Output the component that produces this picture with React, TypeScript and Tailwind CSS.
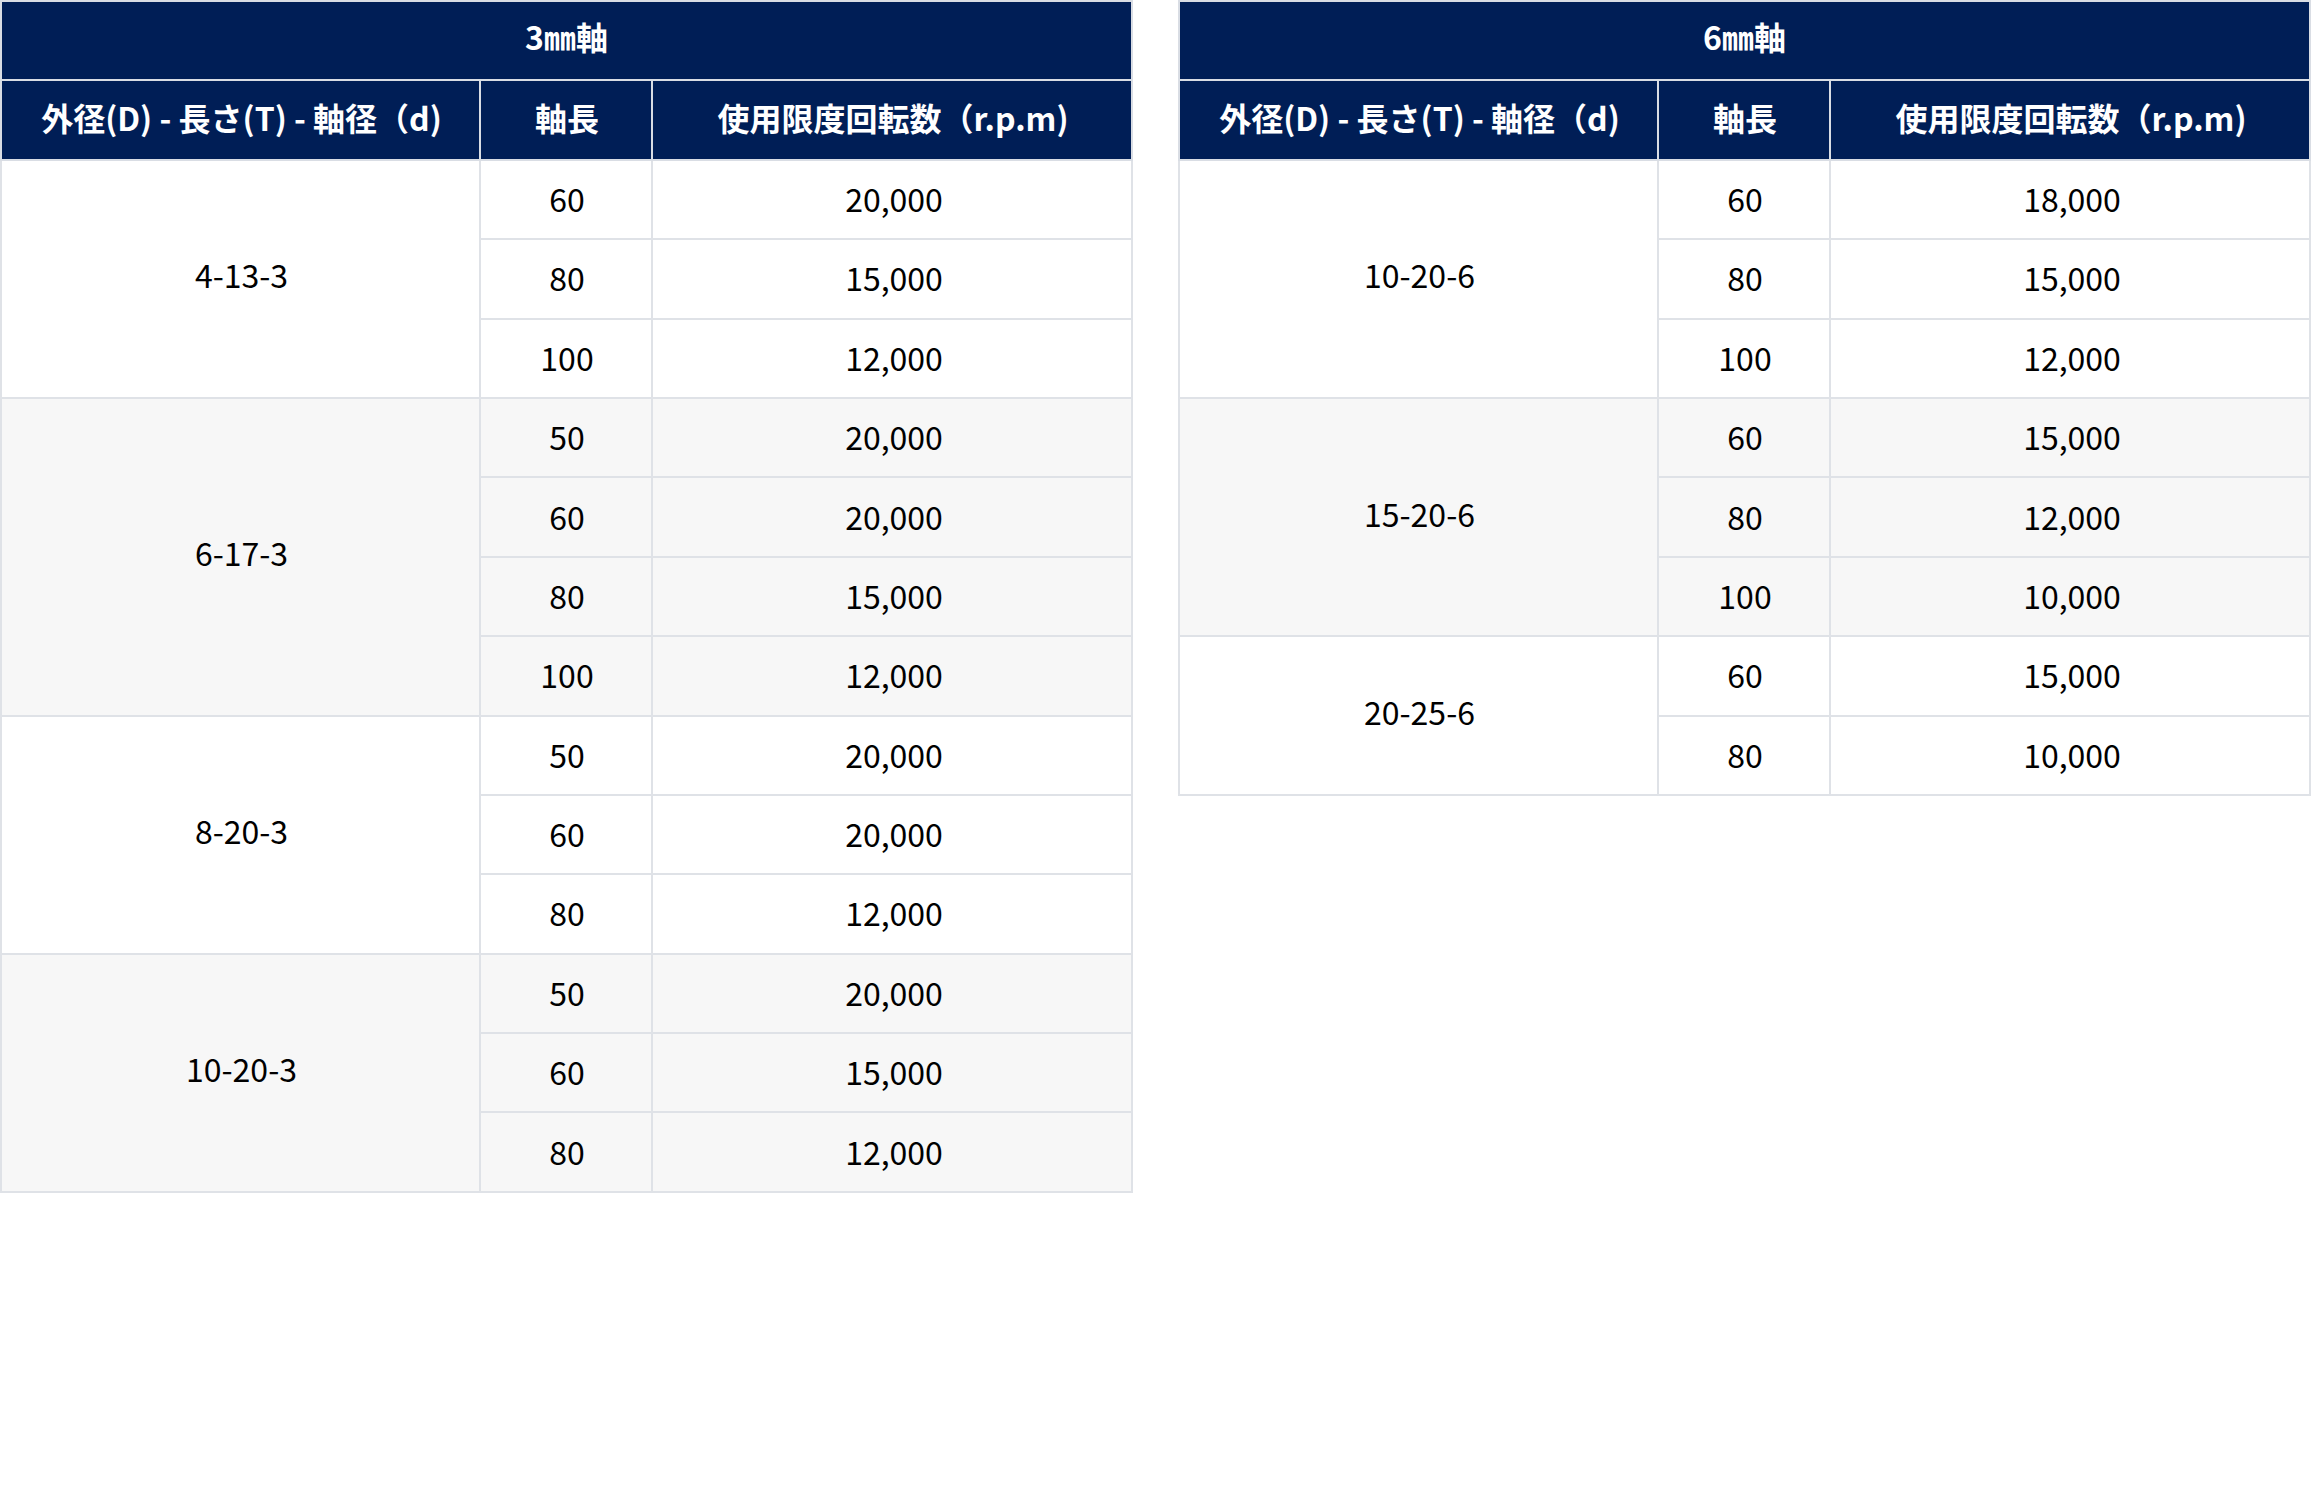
import React from "react";

type Group = {
  size: string;
  rows: [string, string][];
};

type SpecTable = {
  title: string;
  groups: Group[];
};

const tables: SpecTable[] = [
  {
    title: "3㎜軸",
    groups: [
      { size: "4-13-3", rows: [["60", "20,000"], ["80", "15,000"], ["100", "12,000"]] },
      { size: "6-17-3", rows: [["50", "20,000"], ["60", "20,000"], ["80", "15,000"], ["100", "12,000"]] },
      { size: "8-20-3", rows: [["50", "20,000"], ["60", "20,000"], ["80", "12,000"]] },
      { size: "10-20-3", rows: [["50", "20,000"], ["60", "15,000"], ["80", "12,000"]] },
    ],
  },
  {
    title: "6㎜軸",
    groups: [
      { size: "10-20-6", rows: [["60", "18,000"], ["80", "15,000"], ["100", "12,000"]] },
      { size: "15-20-6", rows: [["60", "15,000"], ["80", "12,000"], ["100", "10,000"]] },
      { size: "20-25-6", rows: [["60", "15,000"], ["80", "10,000"]] },
    ],
  },
];

const th = "border-2 border-[#d9dde4] bg-[#001e56] text-white font-bold text-center align-middle";
const td = "border-2 border-[#dfe2e7] text-center align-middle text-black";

function RpmTable({ table }: { table: SpecTable }) {
  return (
    <table className="w-[1133px] table-fixed border-collapse">
      <colgroup>
        <col className="w-[479px]" />
        <col className="w-[172px]" />
        <col />
      </colgroup>
      <thead>
        <tr className="h-[79.4px]">
          <th colSpan={3} className={`${th} pb-[9px]`}>
            {table.title}
          </th>
        </tr>
        <tr className="h-[79.4px]">
          <th className={`${th} pb-[6px] pl-[2px]`}>外径(D) - 長さ(T) - 軸径（d)</th>
          <th className={`${th} pb-[6px] pl-[2px]`}>軸長</th>
          <th className={`${th} pb-[6px] pl-[2px]`}>使用限度回転数（r.p.m)</th>
        </tr>
      </thead>
      <tbody>
        {table.groups.map((group, gi) => {
          const bg = gi % 2 === 1 ? "bg-[#f7f7f7]" : "bg-white";
          return group.rows.map(([length, rpm], ri) => (
            <tr key={group.size + length} className={`h-[79.4px] ${bg}`}>
              {ri === 0 && (
                <td rowSpan={group.rows.length} className={`${td} pb-[9px] pl-[2px]`}>
                  {group.size}
                </td>
              )}
              <td className={`${td} pb-[3px] pl-[2px]`}>{length}</td>
              <td className={`${td} pb-[3px] pl-[4px]`}>{rpm}</td>
            </tr>
          ));
        })}
      </tbody>
    </table>
  );
}

export default function App() {
  return (
    <div
      className="min-h-screen w-[2311px] bg-white text-[32px] leading-none"
      style={{ fontFamily: '"Noto Sans CJK JP", "Noto Sans", sans-serif' }}
    >
      <div className="flex items-start gap-[45px]">
        {tables.map((t) => (
          <RpmTable key={t.title} table={t} />
        ))}
      </div>
    </div>
  );
}
